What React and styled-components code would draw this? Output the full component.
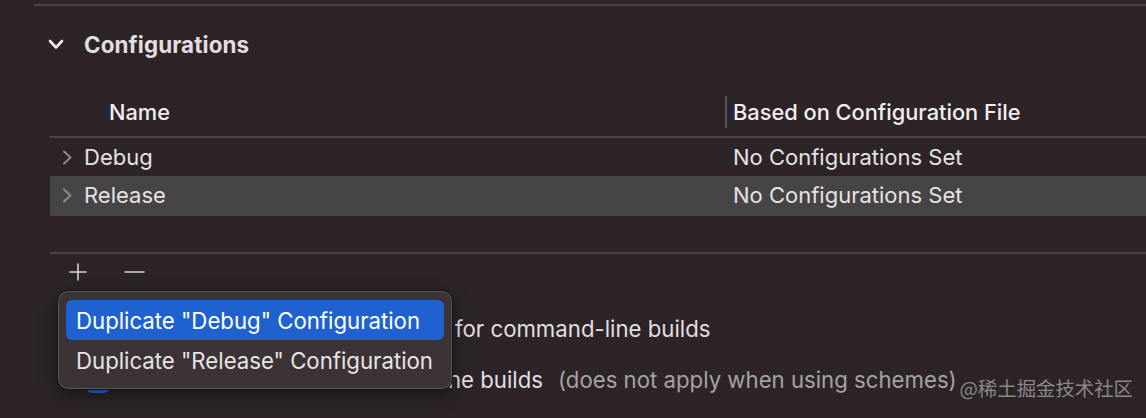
import React from "react";
import styled, { createGlobalStyle } from "styled-components";

const Global = createGlobalStyle`
  html, body { margin: 0; padding: 0; background: #2c2427; }
  body { font-family: Inter, "Noto Sans", "Liberation Sans", sans-serif; color: #e6e2e3; -webkit-font-smoothing: antialiased; }
  * { box-sizing: border-box; }
`;

const Page = styled.div`
  position: relative;
  width: 1146px;
  height: 418px;
  overflow: hidden;
  background: #2c2427;
`;

const TopRule = styled.div`
  margin: 4px 0 0 34px;
  height: 2px;
  background: #4a4346;
`;

const SectionHeader = styled.div`
  height: 76px;
  display: flex;
  align-items: center;
  padding-left: 48px;
  gap: 20px;
  font-size: 22.4px;
  font-weight: 700;
  color: #e2dedf;
  letter-spacing: 0.1px;
`;

const Table = styled.div`
  margin: 14px 0 0 50px;
`;

const HeaderRow = styled.div`
  display: grid;
  grid-template-columns: 675px 1fr;
  height: 42px;
  border-bottom: 2px solid #4a4346;
  align-items: start;
`;

const HeaderCell = styled.div`
  height: 32px;
  display: flex;
  align-items: center;
  font-size: 21.8px;
  font-weight: 500;
  color: #f1eeef;
  padding-left: ${(p) => (p.$first ? "59px" : "6px")};
  border-left: ${(p) => (p.$first ? "none" : "2px solid #585255")};
`;

const Row = styled.div`
  display: grid;
  grid-template-columns: 675px 1fr;
  height: 38px;
  align-items: center;
  background: ${(p) => (p.$selected ? "#474445" : "transparent")};
  font-size: 22px;
  color: #e6e2e3;
`;

const NameCell = styled.div`
  display: flex;
  align-items: center;
  padding-left: 12px;
  gap: 12px;
`;

const ValueCell = styled.div`
  padding-left: 8px;
`;

const TableEnd = styled.div`
  border-top: 2px solid #4a4346;
  height: 40px;
  border-bottom: 2px solid #4a4346;
`;

const Toolbar = styled.div`
  height: 36px;
  display: flex;
  align-items: center;
  padding-left: 69px;
  gap: 37px;
`;

const ToolButton = styled.span`
  display: flex;
  align-items: center;
  color: #d6d1d2;
`;

const Options = styled.div`
  margin-top: 14px;
  display: flex;
  flex-direction: column;
  gap: 3px;
  padding-left: 87px;
  font-size: 22.2px;
  color: #e3dfe0;
`;

const OptionRow = styled.div`
  height: 48px;
  display: flex;
  align-items: center;
  white-space: nowrap;
`;

const Checkbox = styled.span`
  width: 22px;
  height: 23px;
  border-radius: 5px;
  background: #1f63d2;
  flex: none;
  margin-right: 8px;
  transform: translateY(2px);
`;

const Lead = styled.span`
  width: ${(p) => p.$w}px;
  flex: none;
  display: flex;
  justify-content: flex-end;
`;

const Muted = styled.span`
  color: #a7a2a3;
  margin-left: 15px;
`;

const Menu = styled.div`
  position: absolute;
  left: 57px;
  top: 290px;
  width: 396px;
  height: 100px;
  border-radius: 11px;
  background: #3b3335;
  border: 1px solid #161213;
  box-shadow: inset 0 0 0 1px #5d5658, 0 6px 18px rgba(0, 0, 0, 0.35);
  padding: 9px 8px;
  display: flex;
  flex-direction: column;
`;

const MenuItem = styled.div`
  height: 40px;
  display: flex;
  align-items: center;
  padding-left: 10px;
  border-radius: 6px;
  font-size: 22.2px;
  white-space: nowrap;
  color: ${(p) => (p.$active ? "#ffffff" : "#e8e4e5")};
  background: ${(p) => (p.$active ? "#1f62cf" : "transparent")};
`;

const Watermark = styled.div`
  position: absolute;
  right: 13px;
  top: 375px;
  font-family: "Noto Sans CJK SC", "Noto Sans", sans-serif;
  font-size: 19.4px;
  line-height: 26px;
  color: #8c8788;
`;

const ChevronDown = () => (
  <svg width="16" height="11" viewBox="0 0 16 11">
    <polyline points="2,2 8,8.5 14,2" fill="none" stroke="#f0ecec" strokeWidth="2.6" strokeLinecap="round" strokeLinejoin="round" />
  </svg>
);

const ChevronRight = () => (
  <svg width="10" height="15" viewBox="0 0 10 15">
    <polyline points="2,1.5 8.5,7.5 2,13.5" fill="none" stroke="#8e8889" strokeWidth="2" strokeLinecap="round" strokeLinejoin="round" />
  </svg>
);

const Plus = () => (
  <svg width="18" height="18" viewBox="0 0 18 18">
    <path d="M9 1 V17 M1 9 H17" stroke="currentColor" strokeWidth="1.6" strokeLinecap="round" />
  </svg>
);

const Minus = () => (
  <svg width="21" height="18" viewBox="0 0 21 18">
    <path d="M1 9 H20" stroke="currentColor" strokeWidth="1.6" strokeLinecap="round" />
  </svg>
);

const configs = [
  { name: "Debug", base: "No Configurations Set" },
  { name: "Release", base: "No Configurations Set", selected: true },
];

export default function App() {
  return (
    <>
      <Global />
      <Page>
        <TopRule />
        <SectionHeader>
          <ChevronDown />
          <span>Configurations</span>
        </SectionHeader>
        <Table>
          <HeaderRow>
            <HeaderCell $first>Name</HeaderCell>
            <HeaderCell>Based on Configuration File</HeaderCell>
          </HeaderRow>
          {configs.map((c) => (
            <Row key={c.name} $selected={c.selected}>
              <NameCell>
                <ChevronRight />
                <span>{c.name}</span>
              </NameCell>
              <ValueCell>{c.base}</ValueCell>
            </Row>
          ))}
          <TableEnd />
        </Table>
        <Toolbar>
          <ToolButton><Plus /></ToolButton>
          <ToolButton><Minus /></ToolButton>
        </Toolbar>
        <Options>
          <OptionRow>
            <Lead $w={368}>Use Release&nbsp;</Lead>
            <span>for command-line builds</span>
          </OptionRow>
          <OptionRow>
            <Checkbox />
            <Lead $w={426}>Use Release for all machine builds</Lead>
            <Muted>(does not apply when using schemes)</Muted>
          </OptionRow>
        </Options>
        <Menu>
          <MenuItem $active>Duplicate "Debug" Configuration</MenuItem>
          <MenuItem>Duplicate "Release" Configuration</MenuItem>
        </Menu>
        <Watermark>@稀土掘金技术社区</Watermark>
      </Page>
    </>
  );
}
